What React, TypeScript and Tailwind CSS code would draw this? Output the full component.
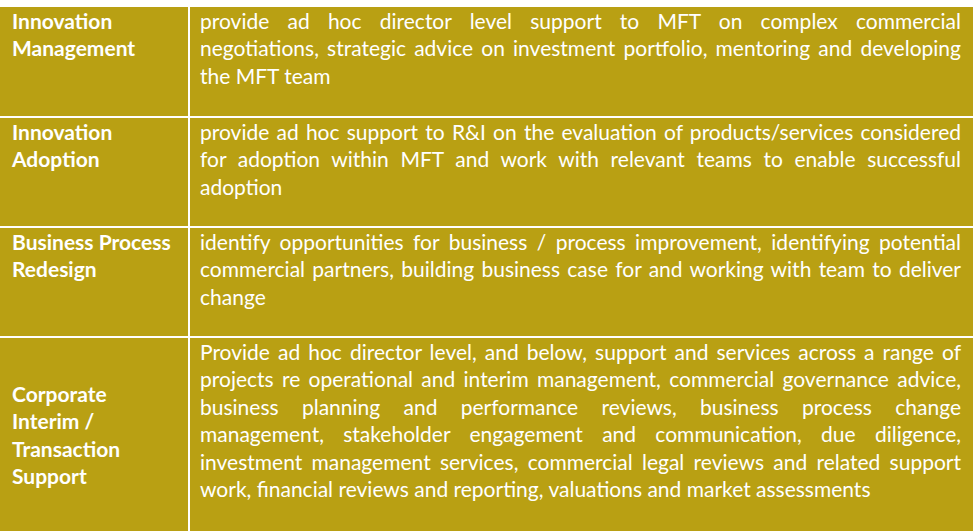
import React from "react";

const rows: { title: string[]; center?: boolean; lines: string[] }[] = [
  {
    title: ["Innovation", "Management"],
    lines: [
      "provide ad hoc director level support to MFT on complex commercial",
      "negotiations, strategic advice on investment portfolio, mentoring and developing",
      "the MFT team",
    ],
  },
  {
    title: ["Innovation", "Adoption"],
    lines: [
      "provide ad hoc support to R&I on the evaluation of products/services considered",
      "for adoption within MFT and work with relevant teams to enable successful",
      "adoption",
    ],
  },
  {
    title: ["Business Process", "Redesign"],
    lines: [
      "identify opportunities for business / process improvement, identifying potential",
      "commercial partners, building business case for and working with team to deliver",
      "change",
    ],
  },
  {
    title: ["Corporate", "Interim /", "Transaction", "Support"],
    center: true,
    lines: [
      "Provide ad hoc director level, and below, support and services across a range of",
      "projects re operational and interim management, commercial governance advice,",
      "business planning and performance reviews, business process change",
      "management, stakeholder engagement and communication, due diligence,",
      "investment management services, commercial legal reviews and related support",
      "work, financial reviews and reporting, valuations and market assessments",
    ],
  },
];

export default function App() {
  return (
    <div
      className="w-[973px] h-[531px] bg-white pt-[7px] overflow-hidden"
      style={{ fontFamily: "Lato, 'Open Sans', sans-serif" }}
    >
      <div className="grid h-full grid-cols-[188px_1fr] grid-rows-[109px_108px_108px_1fr] gap-[2px] bg-white text-white text-[21px] leading-[27.4px]">
        {rows.map((r, i) => (
          <React.Fragment key={i}>
            <div
              className={
                r.center
                  ? "bg-[#b9a013] pl-[12px] font-bold flex flex-col justify-center"
                  : "bg-[#b9a013] pl-[12px] font-bold"
              }
            >
              {r.title.map((t, j) => (
                <div key={j}>{t}</div>
              ))}
            </div>
            <div className="bg-[#b9a013] pl-[10px] pr-[12px]">
              {r.lines.map((l, j) => (
                <div
                  key={j}
                  className={
                    j < r.lines.length - 1
                      ? "text-justify [text-align-last:justify] whitespace-nowrap"
                      : "whitespace-nowrap"
                  }
                >
                  {l}
                </div>
              ))}
            </div>
          </React.Fragment>
        ))}
      </div>
    </div>
  );
}
